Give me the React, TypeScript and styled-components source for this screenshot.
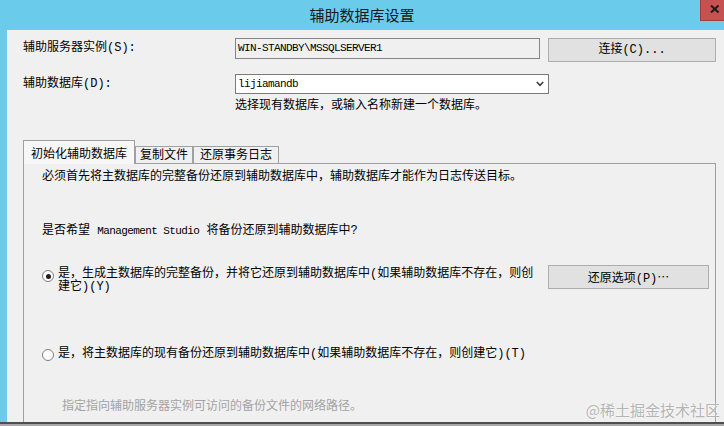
import React from "react";
import styled, { createGlobalStyle } from "styled-components";

const GlobalStyle = createGlobalStyle`
  html, body { margin: 0; padding: 0; background: #ffffff; }
  body {
    font-family: "Liberation Mono", "Noto Sans CJK SC", monospace;
    font-size: 12px;
    color: #000000;
  }
  * { box-sizing: border-box; }
`;

const Window = styled.div`
  position: relative;
  width: 724px;
  height: 426px;
  display: flex;
  flex-direction: column;
  overflow: hidden;
  background: #6bcbea;
`;

const TitleBar = styled.div`
  flex-shrink: 0;
  height: 30px;
  display: grid;
  grid-template-columns: 1fr auto 1fr;
`;

const Title = styled.div`
  grid-column: 2;
  font-family: "Noto Sans CJK SC", sans-serif;
  font-size: 15px;
  line-height: 30px;
  color: #1a1a1a;
`;

const CloseButton = styled.div`
  grid-column: 3;
  justify-self: end;
  align-self: start;
  width: 24px;
  height: 21px;
  background: #c75050;
  border-left: 1px solid #a33c3c;
  border-bottom: 1px solid #a33c3c;
  display: flex;
  align-items: flex-start;
  padding: 5px 0 0 9px;
`;

const Body = styled.div`
  flex: 1;
  min-height: 0;
  display: flex;
`;

const LeftEdge = styled.div`
  width: 7px;
  flex-shrink: 0;
  background: #6bcbea;
`;

const Content = styled.div`
  flex: 1;
  display: flex;
  flex-direction: column;
  background: #f0f0f0;
  padding: 8px 8px 0 16px;
`;

const BottomEdge = styled.div`
  flex-shrink: 0;
  height: 4px;
  border-top: 2px solid #4e4e4e;
  background: #a9a9a9;
`;

const FormRow = styled.div<{ $mt: number }>`
  display: flex;
  align-items: flex-start;
  margin-top: ${(p) => p.$mt}px;
`;

const Label = styled.div<{ $lh: number }>`
  width: 212px;
  flex-shrink: 0;
  line-height: ${(p) => p.$lh}px;
  white-space: nowrap;
`;

const TextBox = styled.div`
  width: 305px;
  height: 21px;
  border: 1px solid #858585;
  background: #f0f0f0;
  padding-left: 2px;
  line-height: 19px;
  white-space: nowrap;
  overflow: hidden;
`;

const Combo = styled.div`
  width: 314px;
  height: 20px;
  border: 1px solid #7a7a7a;
  background: #ffffff;
  display: flex;
  align-items: center;
  justify-content: space-between;
  padding: 0 4px 0 2px;
`;

const Latin = styled.span`
  font-family: "Liberation Mono", monospace;
  font-size: 11px;
  letter-spacing: -0.6px;
`;

const Cjk = styled.span`
  font-family: "Noto Sans CJK SC", sans-serif;
`;

const PushButton = styled.button<{ $w: number; $ml?: string; $mr?: number }>`
  width: ${(p) => p.$w}px;
  height: 24px;
  margin-left: ${(p) => p.$ml ?? "8px"};
  margin-right: ${(p) => p.$mr ?? 0}px;
  flex-shrink: 0;
  padding: 0;
  background: #e1e1e1;
  border: 1px solid #adadad;
  border-radius: 0;
  font: inherit;
  color: #000000;
  line-height: 22px;
  text-align: center;
`;

const Helper = styled.div`
  padding-left: 212px;
  margin-top: 5px;
  line-height: 14px;
`;

const TabStrip = styled.div`
  position: relative;
  z-index: 1;
  display: flex;
  align-items: flex-end;
  margin-top: 27px;
`;

const Tab = styled.div<{ $active?: boolean; $px: number }>`
  border: 1px solid #a0a0a0;
  border-bottom: none;
  background: ${(p) => (p.$active ? "#f7f7f7" : "#f0f0f0")};
  padding: ${(p) => (p.$active ? "6px" : "3px")} ${(p) => p.$px}px 0;
  height: ${(p) => (p.$active ? 24 : 17)}px;
  margin-bottom: ${(p) => (p.$active ? -1 : 0)}px;
  line-height: ${(p) => (p.$active ? 16 : 13)}px;
  white-space: nowrap;
`;

const Panel = styled.div`
  flex: 1;
  display: flex;
  flex-direction: column;
  border: 1px solid #a0a0a0;
  border-bottom: none;
  background: #f0f0f0;
  padding-left: 18px;
`;

const PanelText = styled.div<{ $mt: number; $muted?: boolean; $ml?: number }>`
  margin-top: ${(p) => p.$mt}px;
  margin-left: ${(p) => p.$ml ?? 0}px;
  line-height: 14px;
  color: ${(p) => (p.$muted ? "#a3a3a3" : "#000000")};
  white-space: nowrap;
`;

const RadioRow = styled.div<{ $mt: number; $align: string }>`
  display: flex;
  align-items: ${(p) => p.$align};
  margin-top: ${(p) => p.$mt}px;
`;

const Radio = styled.div<{ $checked?: boolean; $mt?: number }>`
  width: 12px;
  height: 12px;
  flex-shrink: 0;
  margin-top: ${(p) => p.$mt ?? 0}px;
  border-radius: 50%;
  border: 1px solid #7d7d7d;
  background: #ffffff;
  display: flex;
  align-items: center;
  justify-content: center;
  &::after {
    content: "";
    width: 5px;
    height: 5px;
    border-radius: 50%;
    background: ${(p) => (p.$checked ? "#1e1e1e" : "transparent")};
  }
`;

const RadioLabel = styled.div<{ $pt?: number }>`
  width: 482px;
  margin-left: 4px;
  padding-top: ${(p) => p.$pt ?? 0}px;
  line-height: 13px;
`;

const Watermark = styled.div`
  position: absolute;
  right: 4px;
  bottom: 7px;
  font-family: "Noto Sans CJK SC", sans-serif;
  font-size: 15px;
  line-height: 18px;
  color: #b4b4b4;
  text-shadow: 0 0 2px #ffffff;
`;

export default function App() {
  return (
    <>
      <GlobalStyle />
      <Window>
        <TitleBar>
          <Title>辅助数据库设置</Title>
          <CloseButton>
            <svg width="10" height="8" viewBox="0 0 10 8">
              <path d="M1 0.5 L8.5 7.5 M8.5 0.5 L1 7.5" stroke="#1c1c1c" strokeWidth="2" fill="none" />
            </svg>
          </CloseButton>
        </TitleBar>
        <Body>
          <LeftEdge />
          <Content>
            <FormRow $mt={0}>
              <Label $lh={21}>辅助服务器实例(S):</Label>
              <TextBox>
                <Latin>WIN-STANDBY\MSSQLSERVER1</Latin>
              </TextBox>
              <PushButton $w={168}>连接(C)...</PushButton>
            </FormRow>
            <FormRow $mt={12}>
              <Label $lh={20}>辅助数据库(D):</Label>
              <Combo>
                <Latin>lijiamandb</Latin>
                <svg width="8" height="6" viewBox="0 0 8 6">
                  <path d="M0.8 1 L4 4.4 L7.2 1" stroke="#3c3c3c" strokeWidth="1.6" fill="none" />
                </svg>
              </Combo>
            </FormRow>
            <Helper>选择现有数据库，或输入名称新建一个数据库。</Helper>
            <TabStrip>
              <Tab $active $px={7}>初始化辅助数据库</Tab>
              <Tab $px={4}>复制文件</Tab>
              <Tab $px={6}>还原事务日志</Tab>
            </TabStrip>
            <Panel>
              <PanelText $mt={6}>
                必须首先将主数据库的完整备份还原到辅助数据库中，辅助数据库才能作为日志传送目标。
              </PanelText>
              <PanelText $mt={40}>
                是否希望 <Latin>Management Studio</Latin> 将备份还原到辅助数据库中?
              </PanelText>
              <RadioRow $mt={27} $align="flex-start">
                <Radio $checked $mt={5} />
                <RadioLabel $pt={3}>
                  是，生成主数据库的完整备份，并将它还原到辅助数据库中(如果辅助数据库不存在，则创建它)(Y)
                </RadioLabel>
                <PushButton $w={161} $ml="auto" $mr={6}>
                  还原选项(P)<Cjk>…</Cjk>
                </PushButton>
              </RadioRow>
              <RadioRow $mt={54} $align="center">
                <Radio />
                <RadioLabel>是，将主数据库的现有备份还原到辅助数据库中(如果辅助数据库不存在，则创建它)(T)</RadioLabel>
              </RadioRow>
              <PanelText $mt={39} $ml={20} $muted>
                指定指向辅助服务器实例可访问的备份文件的网络路径。
              </PanelText>
            </Panel>
          </Content>
        </Body>
        <BottomEdge />
        <Watermark>@稀土掘金技术社区</Watermark>
      </Window>
    </>
  );
}
